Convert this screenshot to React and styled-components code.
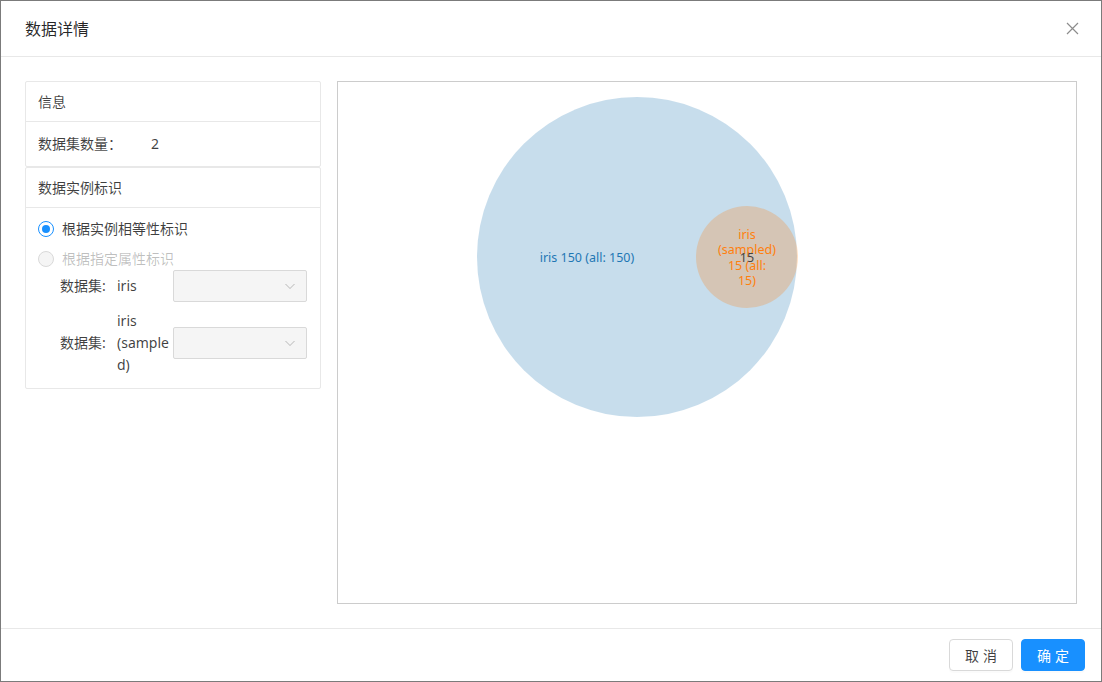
import React from 'react'
import styled, { createGlobalStyle } from 'styled-components'

const GlobalStyle = createGlobalStyle`
  html, body {
    margin: 0;
    padding: 0;
    background: #fff;
  }
  body {
    font-family: "Noto Sans", "Noto Sans CJK SC", sans-serif;
    font-size: 14px;
    color: rgba(0, 0, 0, 0.65);
  }
  * {
    box-sizing: border-box;
  }
`

const Modal = styled.div`
  width: 1102px;
  height: 682px;
  border: 1px solid #7b7b7b;
  display: flex;
  flex-direction: column;
  background: #fff;
`

const Header = styled.div`
  height: 56px;
  flex: none;
  padding: 0 24px;
  display: flex;
  align-items: center;
  justify-content: space-between;
  border-bottom: 1px solid #e8e8e8;
`

const Title = styled.div`
  font-size: 16px;
  line-height: 22px;
  color: rgba(0, 0, 0, 0.85);
`

const CloseButton = styled.button`
  border: 0;
  background: none;
  padding: 0;
  width: 14px;
  height: 14px;
  margin-right: -2px;
  display: flex;
  align-items: center;
  justify-content: center;
  color: rgba(0, 0, 0, 0.45);
`

const Body = styled.div`
  flex: 1;
  padding: 24px;
  display: flex;
  gap: 16px;
  min-height: 0;
`

const Side = styled.div`
  width: 296px;
  flex: none;
  display: flex;
  flex-direction: column;
`

const Card = styled.div`
  border: 1px solid #e8e8e8;
  border-radius: 2px;
  background: #fff;
`

const CardHead = styled.div`
  height: 40px;
  padding: 0 12px;
  display: flex;
  align-items: center;
  border-bottom: 1px solid #e8e8e8;
  color: rgba(0, 0, 0, 0.75);
  line-height: 20px;
`

const InfoRow = styled.div`
  height: 44px;
  padding: 0 12px 1px;
  display: flex;
  align-items: center;
  line-height: 20px;
  color: rgba(0, 0, 0, 0.75);
`

const InfoLabel = styled.span`
  width: 113px;
`

const CardBody = styled.div`
  padding: 10px 12px 12px;
`

const RadioRow = styled.label`
  height: 22px;
  margin-bottom: ${p => (p.disabled ? '0' : '8px')};
  display: flex;
  align-items: center;
  gap: 8px;
  line-height: 20px;
  color: ${p => (p.disabled ? 'rgba(0, 0, 0, 0.25)' : 'rgba(0, 0, 0, 0.75)')};
`

const RadioDot = styled.span`
  width: 16px;
  height: 16px;
  border-radius: 50%;
  flex: none;
  position: relative;
  border: 1px solid ${p => (p.checked ? '#1890ff' : '#d9d9d9')};
  background: ${p => (p.disabled ? '#f5f5f5' : '#fff')};
  &::after {
    content: '';
    display: ${p => (p.checked ? 'block' : 'none')};
    position: absolute;
    left: 3px;
    top: 3px;
    width: 8px;
    height: 8px;
    border-radius: 50%;
    background: #1890ff;
  }
`

const FieldList = styled.div`
  display: flex;
  flex-direction: column;
  gap: 8px;
  padding-left: 22px;
`

const Field = styled.div`
  display: flex;
  align-items: center;
  line-height: 22px;
  color: rgba(0, 0, 0, 0.75);
`

const FieldLabel = styled.span`
  width: 57px;
  flex: none;
`

const FieldValue = styled.span`
  width: 54px;
  margin-right: 2px;
  flex: none;
  overflow-wrap: anywhere;
`

const Select = styled.div`
  width: 134px;
  height: 32px;
  border: 1px solid #d9d9d9;
  border-radius: 2px;
  background: #f5f5f5;
  display: flex;
  align-items: center;
  justify-content: flex-end;
  padding-right: 10px;
  color: rgba(0, 0, 0, 0.25);
`

const ChartBox = styled.div`
  flex: 1;
  border: 1px solid #cccccc;
  position: relative;
`

const Footer = styled.div`
  height: 53px;
  flex: none;
  border-top: 1px solid #e8e8e8;
  padding: 10px 16px;
  display: flex;
  justify-content: flex-end;
  gap: 8px;
`

const Button = styled.button`
  width: 64px;
  height: 32px;
  border-radius: 4px;
  font-family: inherit;
  font-size: 14px;
  letter-spacing: 4px;
  text-indent: 4px;
  padding: 0;
  border: 1px solid ${p => (p.primary ? '#1890ff' : '#d9d9d9')};
  background: ${p => (p.primary ? '#1890ff' : '#fff')};
  color: ${p => (p.primary ? '#fff' : 'rgba(0, 0, 0, 0.75)')};
  box-shadow: 0 2px 0 rgba(0, 0, 0, 0.015);
`

const VennLabel = styled.text`
  font-family: "Noto Sans", "Noto Sans CJK SC", sans-serif;
  font-size: 12.5px;
`

const Chevron = () => (
  <svg width="12" height="12" viewBox="0 0 12 12" fill="none">
    <path d="M1.5 4L6 8.5L10.5 4" stroke="currentColor" strokeWidth="1" />
  </svg>
)

const Venn = () => (
  <svg width="100%" height="100%">
    <circle cx="299" cy="175" r="160" fill="#1f77b4" fillOpacity="0.25" />
    <circle cx="409" cy="175" r="51" fill="#ff7f0e" fillOpacity="0.25" />
    <VennLabel x="249" y="175" textAnchor="middle" dominantBaseline="central" fill="#1f77b4">
      iris 150 (all: 150)
    </VennLabel>
    <VennLabel textAnchor="middle" fill="#ff7f0e">
      {['iris', '(sampled)', '15 (all:', '15)'].map((t, i) => (
        <tspan key={i} x="409" y={152 + i * 15.5} dominantBaseline="central">
          {t}
        </tspan>
      ))}
    </VennLabel>
    <VennLabel x="409" y="175" textAnchor="middle" dominantBaseline="central" fill="#444">
      15
    </VennLabel>
  </svg>
)

export default function App() {
  return (
    <>
      <GlobalStyle />
      <Modal>
        <Header>
          <Title>数据详情</Title>
          <CloseButton>
            <svg width="13" height="13" viewBox="0 0 13 13">
              <path d="M1 1L12 12M12 1L1 12" stroke="currentColor" strokeWidth="1.2" />
            </svg>
          </CloseButton>
        </Header>
        <Body>
          <Side>
            <Card>
              <CardHead>信息</CardHead>
              <InfoRow>
                <InfoLabel>数据集数量：</InfoLabel>
                <span>2</span>
              </InfoRow>
            </Card>
            <Card>
              <CardHead>数据实例标识</CardHead>
              <CardBody>
                <RadioRow>
                  <RadioDot checked />
                  根据实例相等性标识
                </RadioRow>
                <RadioRow disabled>
                  <RadioDot disabled />
                  根据指定属性标识
                </RadioRow>
                <FieldList>
                  <Field>
                    <FieldLabel>数据集:</FieldLabel>
                    <FieldValue>iris</FieldValue>
                    <Select>
                      <Chevron />
                    </Select>
                  </Field>
                  <Field>
                    <FieldLabel>数据集:</FieldLabel>
                    <FieldValue>iris (sampled)</FieldValue>
                    <Select>
                      <Chevron />
                    </Select>
                  </Field>
                </FieldList>
              </CardBody>
            </Card>
          </Side>
          <ChartBox>
            <Venn />
          </ChartBox>
        </Body>
        <Footer>
          <Button>取消</Button>
          <Button primary>确定</Button>
        </Footer>
      </Modal>
    </>
  )
}
